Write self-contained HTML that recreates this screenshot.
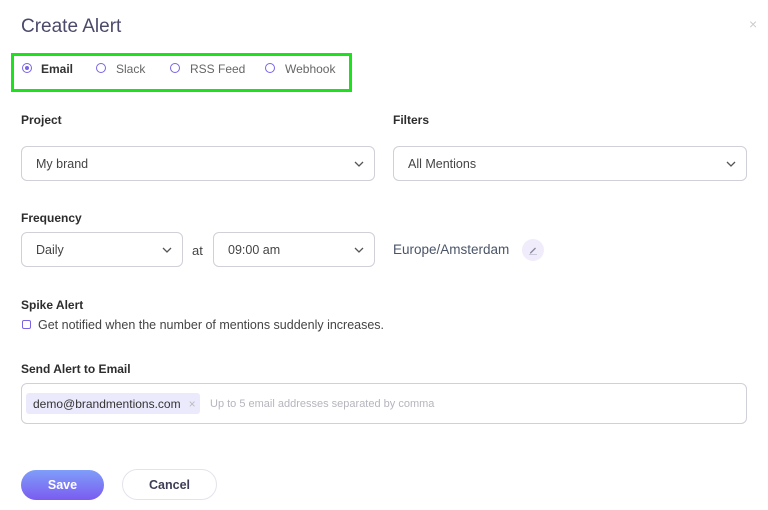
<!DOCTYPE html>
<html><head><meta charset="utf-8"><style>
*{box-sizing:border-box;margin:0;padding:0}
body{width:768px;height:510px;background:#fff;font-family:"Liberation Sans",sans-serif;position:relative;overflow:hidden;color:#333}
.a{position:absolute;white-space:nowrap}
.lbl{font-size:12px;font-weight:bold;color:#2d2d2d}
.sel{position:absolute;border:1px solid #cfd0d8;border-radius:6px;font-size:12.5px;color:#444;padding-left:14px;display:flex;align-items:center}
.sel svg{position:absolute;right:10px;top:50%;margin-top:-3px}
.r{position:absolute;width:10px;height:10px;border:1px solid #7a63e6;border-radius:50%}
.rt{position:absolute;font-size:12px;color:#666}
</style></head><body>
<div class="a" style="left:21px;top:16px;font-size:19px;color:#4b4a6b">Create Alert</div>
<div class="a" style="left:749px;top:16px;font-size:14px;color:#ccc">×</div>
<div class="a" style="left:11px;top:53px;width:341px;height:39px;border:3px solid #1ee01e"></div>
<div class="r" style="left:22px;top:63px"><div style="position:absolute;left:2px;top:2px;width:4px;height:4px;border-radius:50%;background:#7a63e6"></div></div>
<div class="rt" style="left:41px;top:62px;font-weight:bold;color:#333">Email</div>
<div class="r" style="left:96px;top:63px"></div><div class="rt" style="left:116px;top:62px">Slack</div>
<div class="r" style="left:170px;top:63px"></div><div class="rt" style="left:190px;top:62px">RSS Feed</div>
<div class="r" style="left:265px;top:63px"></div><div class="rt" style="left:285px;top:62px">Webhook</div>

<div class="a lbl" style="left:21px;top:113px">Project</div>
<div class="a lbl" style="left:393px;top:113px">Filters</div>
<div class="sel" style="left:21px;top:146px;width:354px;height:35px">My brand<svg width="10" height="6"><path d="M1 1l4 4 4-4" stroke="#555" fill="none" stroke-width="1.3"/></svg></div>
<div class="sel" style="left:393px;top:146px;width:354px;height:35px">All Mentions<svg width="10" height="6"><path d="M1 1l4 4 4-4" stroke="#555" fill="none" stroke-width="1.3"/></svg></div>

<div class="a lbl" style="left:21px;top:211px">Frequency</div>
<div class="sel" style="left:21px;top:232px;width:162px;height:35px">Daily<svg width="10" height="6"><path d="M1 1l4 4 4-4" stroke="#555" fill="none" stroke-width="1.3"/></svg></div>
<div class="a" style="left:192px;top:243px;font-size:13px;color:#444">at</div>
<div class="sel" style="left:213px;top:232px;width:162px;height:35px">09:00 am<svg width="10" height="6"><path d="M1 1l4 4 4-4" stroke="#555" fill="none" stroke-width="1.3"/></svg></div>
<div class="a" style="left:393px;top:242px;font-size:13.5px;color:#4a5568">Europe/Amsterdam</div>
<div class="a" style="left:522px;top:239px;width:22px;height:22px;border-radius:50%;background:#f0ecfc"><svg width="22" height="22"><path d="M8 13.5l5-5 1 1-5 5h-1z" fill="#8a8aa0"/><path d="M7 15.5h8" stroke="#c8c8d8" stroke-width="1"/></svg></div>

<div class="a lbl" style="left:21px;top:298px">Spike Alert</div>
<div class="a" style="left:22px;top:320px;width:9px;height:9px;border:1px solid #7a63e6;border-radius:2px"></div>
<div class="a" style="left:38px;top:318px;font-size:12.5px;color:#444">Get notified when the number of mentions suddenly increases.</div>

<div class="a lbl" style="left:21px;top:362px">Send Alert to Email</div>
<div class="a" style="left:21px;top:383px;width:726px;height:41px;border:1px solid #cfd0d8;border-radius:6px"></div>
<div class="a" style="left:26px;top:393px;width:174px;height:21px;background:#ebeafc;border-radius:3px;font-size:12px;color:#333;padding:4px 0 0 7px">demo@brandmentions.com<span style="color:#bbb;margin-left:8px">×</span></div>
<div class="a" style="left:210px;top:398px;font-size:11px;color:#b5b5be">Up to 5 email addresses separated by comma</div>

<div class="a" style="left:21px;top:470px;width:83px;height:30px;border-radius:15px;background:linear-gradient(#7f9ef9,#7a5cf0);color:#fff;font-size:12.5px;font-weight:bold;text-align:center;line-height:30px">Save</div>
<div class="a" style="left:122px;top:469px;width:95px;height:31px;border-radius:16px;border:1px solid #e3e3ec;color:#3d3d55;font-size:12.5px;font-weight:bold;text-align:center;line-height:30px">Cancel</div>
</body></html>
